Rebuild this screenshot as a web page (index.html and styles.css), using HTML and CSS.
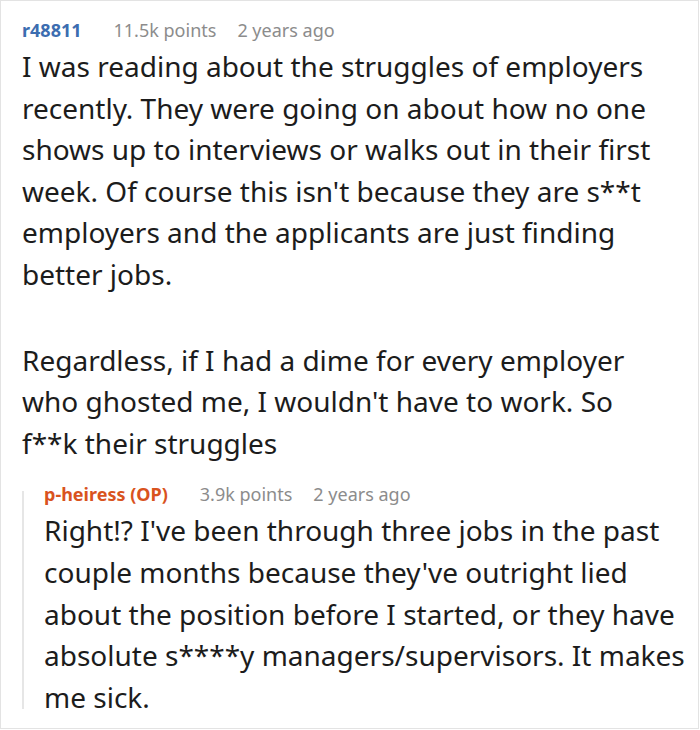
FILE: index.html
```html
<!DOCTYPE html>
<html>
<head>
<meta charset="utf-8">
<link rel="stylesheet" href="styles.css">
</head>
<body>
<div class="thread">
  <div class="meta">
    <span class="author">r48811</span>
    <span class="points">11.5k points</span>
    <span class="time">2 years ago</span>
  </div>
  <div class="body main-body">
    <p>I was reading about the struggles of employers recently. They were going on about how no one shows up to interviews or walks out in their first week. Of course this isn't because they are s**t employers and the applicants are just finding better jobs.</p>
    <p>Regardless, if I had a dime for every employer who ghosted me, I wouldn't have to work. So f**k their struggles</p>
  </div>
  <div class="reply">
    <div class="meta">
      <span class="author op">p-heiress (OP)</span>
      <span class="points">3.9k points</span>
      <span class="time">2 years ago</span>
    </div>
    <div class="body">
      <p>Right!? I've been through three jobs in the past couple months because they've outright lied about the position before I started, or they have absolute s****y managers/supervisors. It makes me sick.</p>
    </div>
  </div>
</div>
</body>
</html>
```
FILE: styles.css
```css
html, body {
  margin: 0;
  padding: 0;
  background: #ffffff;
}

.thread {
  box-sizing: border-box;
  width: 699px;
  min-height: 729px;
  border: 1px solid #e3e3e3;
  padding: 13px 4px 7px 21px;
  font-family: "Noto Sans", "Open Sans", sans-serif;
  color: #1c1c1c;
}

.meta {
  display: flex;
  align-items: baseline;
  font-size: 18px;
  line-height: 32px;
  white-space: nowrap;
}

.author {
  font-weight: 700;
  color: #3c6db0;
}

.author.op {
  color: #d9531e;
}

.points {
  color: #8c8c8c;
  margin-left: 32px;
}

.time {
  color: #8c8c8c;
  margin-left: 21px;
}

.body {
  font-size: 28px;
  line-height: 41.6px;
  margin-top: 0;
}

.main-body {
  max-width: 650px;
}

.body p {
  margin: 0;
}

.body p + p {
  margin-top: 44px;
}

.reply {
  position: relative;
  margin-top: 14px;
  padding-left: 22px;
}

.reply::before {
  content: "";
  position: absolute;
  left: 0;
  top: 13px;
  bottom: 9px;
  width: 2px;
  background: #e6e6e6;
}

.reply .body {
  margin-top: 0;
}
```
